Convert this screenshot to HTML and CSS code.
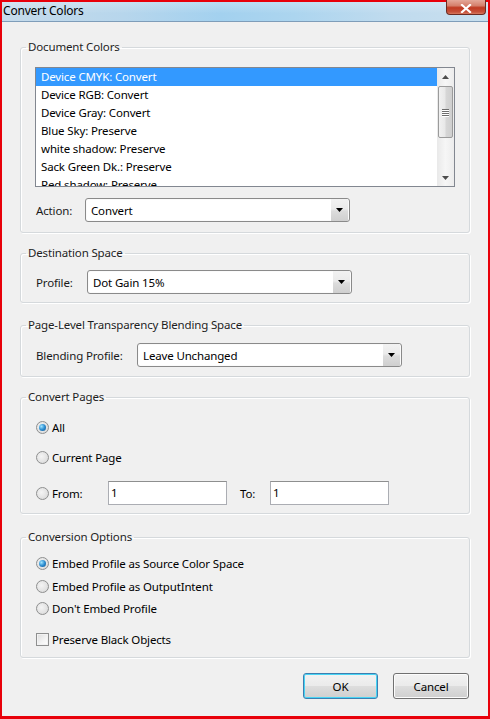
FILE: index.html
```html
<!DOCTYPE html>
<html>
<head>
<meta charset="utf-8">
<link rel="stylesheet" href="styles.css">
</head>
<body>
<div class="window">
  <div class="titlebar">
    <span class="title">Convert Colors</span>
    <div class="close"><svg width="12" height="9" viewBox="0 0 12 9"><path d="M2 1 L10 8 M10 1 L2 8" stroke="#fff" stroke-width="2.2" stroke-linecap="square"/></svg></div>
  </div>
  <div class="client">
    <fieldset class="group g-doc">
      <legend>Document Colors</legend>
      <div class="listbox">
        <ul class="items">
          <li class="sel">Device CMYK: Convert</li>
          <li>Device RGB: Convert</li>
          <li>Device Gray: Convert</li>
          <li>Blue Sky: Preserve</li>
          <li>white shadow: Preserve</li>
          <li>Sack Green Dk.: Preserve</li>
          <li>Red shadow: Preserve</li>
        </ul>
        <div class="vscroll">
          <div class="sb-btn"><svg width="7" height="4" viewBox="0 0 7 4"><path d="M0 4 L3.5 0 L7 4Z" fill="#4d4d4d"/></svg></div>
          <div class="sb-track">
            <div class="thumb"><span class="grip"></span><span class="grip"></span><span class="grip"></span><span class="grip"></span></div>
          </div>
          <div class="sb-btn"><svg width="7" height="4" viewBox="0 0 7 4"><path d="M0 0 L3.5 4 L7 0Z" fill="#4d4d4d"/></svg></div>
        </div>
      </div>
      <div class="row action-row">
        <span class="lbl lbl-action">Action:</span>
        <div class="combo"><span class="val">Convert</span><span class="drop"><svg width="7" height="4" viewBox="0 0 7 4"><path d="M0 0 L7 0 L3.5 4Z" fill="#000"/></svg></span></div>
      </div>
    </fieldset>

    <fieldset class="group g-dest">
      <legend>Destination Space</legend>
      <div class="row">
        <span class="lbl lbl-profile">Profile:</span>
        <div class="combo"><span class="val">Dot Gain 15%</span><span class="drop"><svg width="7" height="4" viewBox="0 0 7 4"><path d="M0 0 L7 0 L3.5 4Z" fill="#000"/></svg></span></div>
      </div>
    </fieldset>

    <fieldset class="group g-blend">
      <legend>Page-Level Transparency Blending Space</legend>
      <div class="row">
        <span class="lbl lbl-blend">Blending Profile:</span>
        <div class="combo"><span class="val">Leave Unchanged</span><span class="drop"><svg width="7" height="4" viewBox="0 0 7 4"><path d="M0 0 L7 0 L3.5 4Z" fill="#000"/></svg></span></div>
      </div>
    </fieldset>

    <fieldset class="group g-pages">
      <legend>Convert Pages</legend>
      <div class="opt opt-all"><span class="radio on"></span><span>All</span></div>
      <div class="opt opt-current"><span class="radio"></span><span>Current Page</span></div>
      <div class="opt opt-from">
        <span class="radio"></span><span class="lbl-from">From:</span>
        <div class="field">1</div>
        <span class="lbl-to">To:</span>
        <div class="field">1</div>
      </div>
    </fieldset>

    <fieldset class="group g-conv">
      <legend>Conversion Options</legend>
      <div class="opt opt-c1"><span class="radio on"></span><span>Embed Profile as Source Color Space</span></div>
      <div class="opt opt-c2"><span class="radio"></span><span>Embed Profile as OutputIntent</span></div>
      <div class="opt opt-c3"><span class="radio"></span><span>Don't Embed Profile</span></div>
      <div class="opt opt-c4"><span class="check"></span><span>Preserve Black Objects</span></div>
    </fieldset>

    <div class="buttons">
      <button class="btn btn-default">OK</button>
      <button class="btn">Cancel</button>
    </div>
  </div>
</div>
</body>
</html>
```

FILE: styles.css
```css
* { box-sizing: border-box; }
html, body { margin: 0; padding: 0; }
body {
  font-family: "Segoe UI", "Noto Sans", "Open Sans", sans-serif;
  font-size: 11.5px;
  letter-spacing: -0.15px;
  color: #000;
  background: #f0f0f0;
}
.window {
  width: 490px;
  height: 719px;
  border: 2px solid #e8000a;
  border-bottom-width: 3px;
  background: #f0f0f0;
  display: flex;
  flex-direction: column;
  position: relative;
}
.titlebar {
  height: 20px;
  flex: none;
  background:
    linear-gradient(to bottom, rgba(255,255,255,0.25), rgba(255,255,255,0) 60%),
    linear-gradient(to right, #c6dbeb 0%, #b7d6ec 25%, #a3d1ef 45%, #acd5ef 60%, #c0dbee 80%, #c8dfee 100%);
  border-bottom: 1px solid #7f9db9;
  position: relative;
}
.title {
  display: block;
  padding-left: 1px;
  line-height: 17px;
  font-size: 12px;
  letter-spacing: -0.2px;
  color: #000;
}
.close {
  position: absolute;
  right: 2px;
  top: -2px;
  width: 40px;
  height: 15px;
  border: 1px solid #6b2b22;
  border-top: none;
  border-radius: 0 0 4px 4px;
  background: linear-gradient(to bottom, #e4a899 0%, #d5806c 40%, #c03a22 55%, #c6513a 85%, #d87a5f 100%);
  display: flex;
  align-items: center;
  justify-content: center;
  padding-top: 2px;
}
.client {
  flex: 1;
  padding: 0 18px 0 18px;
  display: flex;
  flex-direction: column;
}
.group {
  margin: 0;
  padding: 0 14px;
  border: 1px solid #d5d9dc;
  border-radius: 3px;
  box-shadow: inset 1px 1px 0 #fff, 1px 1px 0 #fff;
  min-width: 0;
}
.group legend {
  padding: 0 2px;
  margin-left: -9px;
  line-height: 14px;
  font-size: 11.5px;
  color: #1e1e1e;
}
.g-doc { margin-top: 18px; padding-top: 13px; padding-bottom: 10px; }
.g-dest { margin-top: 13px; padding-top: 10px; padding-bottom: 8px; }
.g-blend { margin-top: 15px; padding-top: 11px; padding-bottom: 9px; }
.g-pages { margin-top: 13px; padding-top: 13px; padding-bottom: 8px; }
.g-conv { margin-top: 16px; padding-top: 9px; padding-bottom: 8px; }

/* list box */
.listbox {
  height: 120px;
  border: 1px solid #828790;
  background: #fff;
  display: flex;
  overflow: hidden;
}
.items {
  list-style: none;
  margin: 0;
  padding: 0;
  flex: 1;
  overflow: hidden;
}
.items li {
  height: 18px;
  line-height: 18px;
  padding-left: 5px;
  white-space: nowrap;
}
.items li.sel {
  background: #3399ff;
  color: #fff;
}
.vscroll {
  width: 17px;
  flex: none;
  display: flex;
  flex-direction: column;
  background: linear-gradient(to right, #e9e9e9, #f6f6f6 50%, #ececec);
}
.sb-btn {
  height: 17px;
  display: flex;
  align-items: center;
  justify-content: center;
}
.sb-track {
  flex: 1;
  padding: 1px 1px 0 1px;
}
.thumb {
  height: 52px;
  border: 1px solid #9b9b9b;
  border-radius: 2px;
  background: linear-gradient(to right, #f1f1f1 0%, #e8e8e8 45%, #d6d6d6 55%, #cfcfcf 100%);
  display: flex;
  flex-direction: column;
  align-items: center;
  justify-content: center;
  gap: 1px;
}
.grip {
  display: block;
  width: 7px;
  height: 1px;
  background: #6d6d6d;
  box-shadow: 0 1px 0 #fff;
}

/* rows with combos */
.row {
  display: flex;
  align-items: center;
  height: 24px;
}
.action-row { margin-top: 11px; }
.lbl { color: #1a1a1a; padding-left: 1px; }
.lbl-action { width: 50px; }
.lbl-profile { width: 52px; }
.lbl-blend { width: 102px; }
.combo {
  width: 265px;
  height: 24px;
  border: 1px solid #8a8a8a;
  border-radius: 3px;
  background: #fff;
  display: flex;
  align-items: center;
  box-shadow: inset 0 0 0 1px #fbfbfb;
}
.combo .val {
  flex: 1;
  padding-left: 5px;
}
.combo .drop {
  width: 17px;
  height: 22px;
  margin-right: 1px;
  display: flex;
  align-items: center;
  justify-content: center;
  background: linear-gradient(to bottom, #f2f2f2 0%, #ebebeb 45%, #dcdcdc 55%, #cfcfcf 100%);
}

/* options */
.opt {
  display: flex;
  align-items: center;
  height: 20px;
}
.radio {
  width: 13px;
  height: 13px;
  border-radius: 50%;
  border: 1px solid #8e8f8f;
  background: radial-gradient(circle at 40% 40%, #f4f4f4 0%, #e2e2e2 60%, #cfcfcf 100%);
  margin-left: 1px;
  margin-right: 3px;
  flex: none;
  position: relative;
}
.radio.on::after {
  content: "";
  position: absolute;
  left: 2px;
  top: 2px;
  width: 7px;
  height: 7px;
  border-radius: 50%;
  background: radial-gradient(circle at 35% 35%, #9fe4ff 0%, #2d8ed1 50%, #0e4f8a 100%);
}
.check {
  width: 13px;
  height: 13px;
  border: 1px solid #8e8f8f;
  background: linear-gradient(135deg, #dcdcdc 0%, #f4f4f4 60%, #fff 100%);
  box-shadow: inset 0 0 0 1px #f2f2f2;
  margin-left: 1px;
  margin-right: 3px;
  flex: none;
}
.opt-current { margin-top: 10px; }
.opt-from { margin-top: 14px; height: 24px; }
.lbl-from { width: 56px; }
.lbl-to { margin-left: 13px; width: 30px; }
.field {
  height: 24px;
  width: 119px;
  border: 1px solid #abadb3;
  border-top-color: #8e8f8f;
  background: #fff;
  padding-left: 2px;
  line-height: 21px;
}
.opt-c2 { margin-top: 3px; }
.opt-c3 { margin-top: 2px; }
.opt-c4 { margin-top: 11px; }

/* buttons */
.buttons {
  display: flex;
  justify-content: flex-end;
  gap: 15px;
  margin-top: 15px;
  padding-right: 1px;
}
.btn {
  font-family: inherit;
  font-size: 11.5px;
  letter-spacing: -0.15px;
  color: #000;
  width: 75px;
  height: 26px;
  border: 1px solid #707070;
  border-radius: 3px;
  background: linear-gradient(to bottom, #f2f2f2 0%, #ebebeb 48%, #dddddd 52%, #cfcfcf 100%);
  box-shadow: inset 0 0 0 1px #fcfcfc;
  padding: 0;
}
.btn-default {
  border-color: #3c7fb1;
  box-shadow: inset 0 0 0 1px #48d4f4;
}
.buttons .btn + .btn { width: 76px; }
```
